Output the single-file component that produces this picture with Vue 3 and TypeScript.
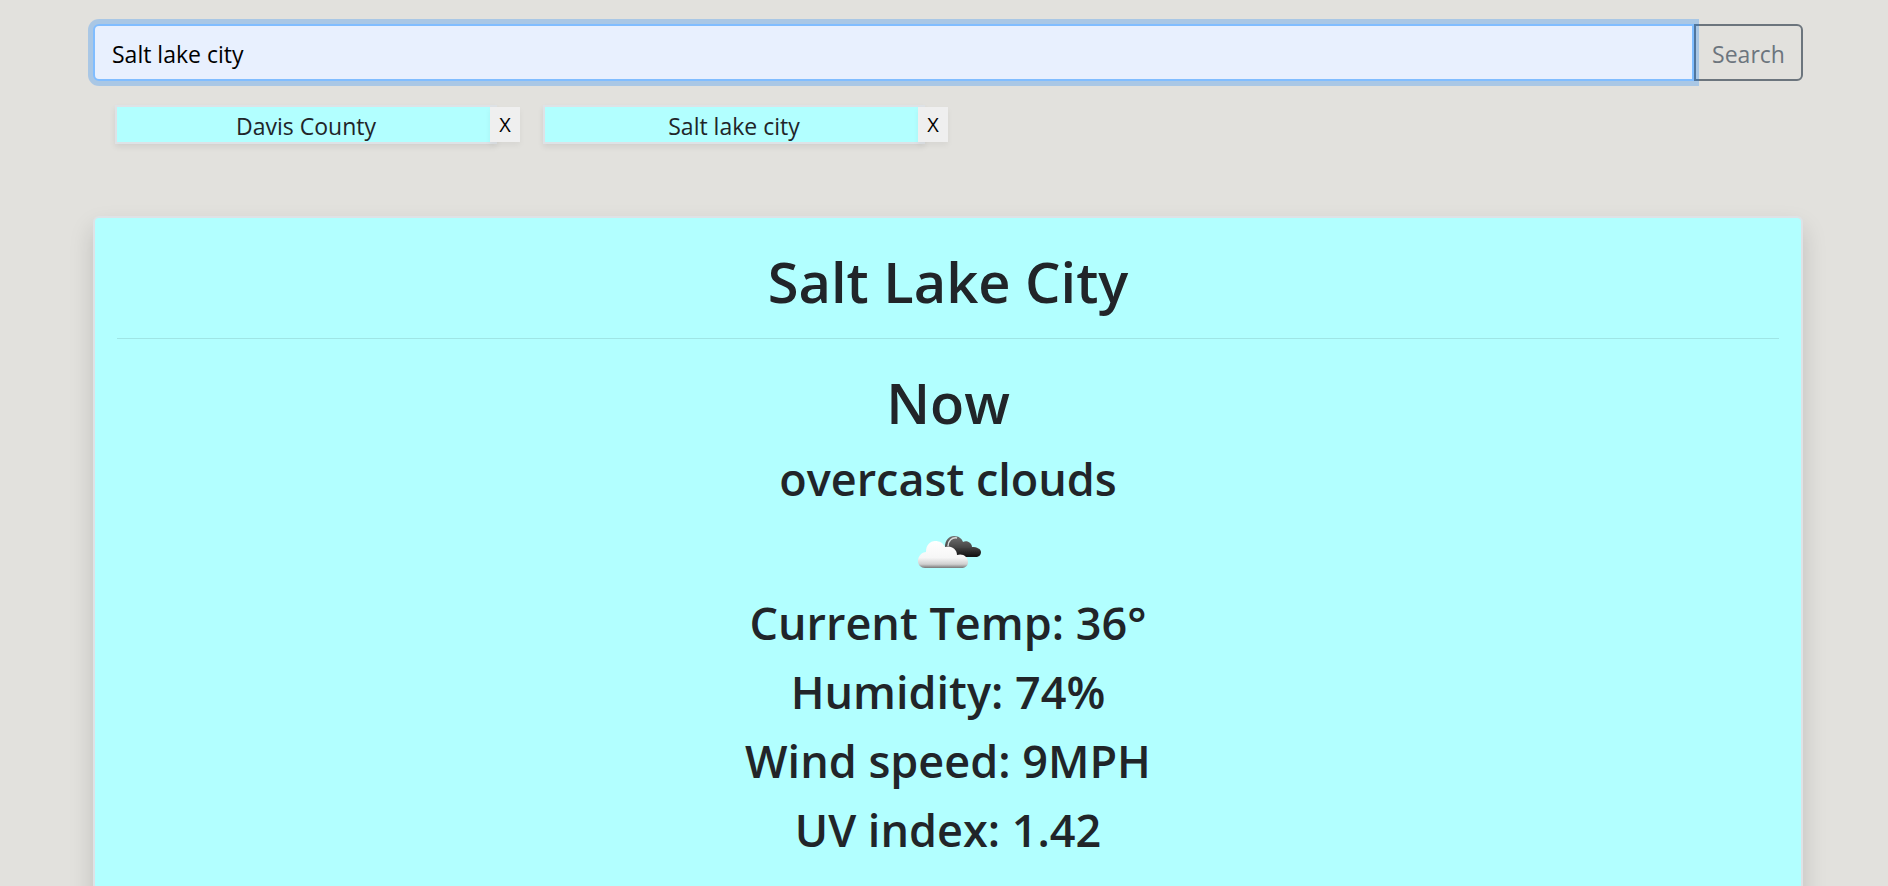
<script setup lang="ts">
import { computed, ref } from 'vue'

interface Weather {
  city: string
  description: string
  temp: number
  humidity: number
  wind: number
  uv: number
}

const query = ref<string>('Salt lake city')
const history = ref<string[]>(['Davis County', 'Salt lake city'])

const weather = ref<Weather>({
  city: 'Salt Lake City',
  description: 'overcast clouds',
  temp: 36,
  humidity: 74,
  wind: 9,
  uv: 1.42,
})

const readings = computed<string[]>(() => [
  `Current Temp: ${weather.value.temp}°`,
  `Humidity: ${weather.value.humidity}%`,
  `Wind speed: ${weather.value.wind}MPH`,
  `UV index: ${weather.value.uv}`,
])

function search(): void {
  const name = query.value.trim()
  if (name && !history.value.includes(name)) history.value.push(name)
}

function remove(index: number): void {
  history.value.splice(index, 1)
}
</script>

<template>
  <main class="page">
    <form class="search" @submit.prevent="search">
      <input v-model="query" class="search-input" type="text" aria-label="City" />
      <button class="search-button" type="submit">Search</button>
    </form>

    <ul class="history">
      <li v-for="(name, index) in history" :key="name" class="history-item">
        <button class="city" type="button" @click="query = name">{{ name }}</button>
        <button class="remove" type="button" :aria-label="`X, remove ${name}`" @click="remove(index)">X</button>
      </li>
    </ul>

    <section class="card">
      <h1>{{ weather.city }}</h1>
      <hr />
      <h1>Now</h1>
      <h2>{{ weather.description }}</h2>
      <svg class="icon" viewBox="0 0 75 75" role="img" aria-label="Overcast clouds">
        <defs>
          <linearGradient id="light" x1="0" y1="0" x2="0" y2="1">
            <stop offset="0" stop-color="#ffffff" />
            <stop offset="0.62" stop-color="#f6f6f6" />
            <stop offset="0.86" stop-color="#cfcfcf" />
            <stop offset="1" stop-color="#777777" />
          </linearGradient>
          <linearGradient id="dark" x1="0" y1="0" x2="0" y2="1">
            <stop offset="0" stop-color="#707070" />
            <stop offset="0.5" stop-color="#4a4a4a" />
            <stop offset="0.75" stop-color="#2b2b2b" />
            <stop offset="1" stop-color="#111111" />
          </linearGradient>
          <filter id="soft" x="-10%" y="-10%" width="120%" height="120%">
            <feGaussianBlur stdDeviation="0.6" />
          </filter>
        </defs>
        <g filter="url(#soft)">
          <path
            fill="url(#dark)"
            d="M34 28 C34 21 38 17 43 17 C48 17 51 20 52 23 C56 21 61 24 61 28 C66 28 70 30 70 33 C70 36 68 38 64 38 H46 C38 38 34 34 34 28 Z"
          />
          <path fill="none" stroke="#d8dcdc" stroke-width="1.5" d="M37 27 C37 22 41 18 46 19" />
          <path
            fill="url(#light)"
            d="M14 49 C10 49 7 46 7 42 C7 37 11 33 15 33 C15 26 19 22 24 22 C29 22 32 24 34 28 C40 26 46 30 46 36 C52 34 57 38 57 43 C57 47 54 49 50 49 Z"
          />
        </g>
      </svg>
      <h2 v-for="line in readings" :key="line">{{ line }}</h2>
    </section>
  </main>
</template>

<style>
body {
  margin: 0;
  background: #e2e1dd;
}
</style>

<style scoped>
.page {
  box-sizing: border-box;
  padding: 24px 85px 0 93px;
  color: #212529;
  font-family: "Segoe UI", "Open Sans", "Noto Sans", sans-serif;
  font-size: 23px;
}

button,
input {
  box-sizing: border-box;
  margin: 0;
  font-family: inherit;
}

.search {
  display: flex;
  height: 57px;
}

.search-input {
  position: relative;
  z-index: 1;
  flex: 1;
  min-width: 0;
  padding: 2px 17px 0;
  border: 2px solid #80bdff;
  border-radius: 6px 0 0 6px;
  outline: 0;
  background: #e8f0fe;
  box-shadow: 0 0 0 5px rgba(0, 123, 255, 0.25);
  color: #000;
  font-size: 23px;
}

.search-button {
  width: 109px;
  padding: 2px 0 0;
  border: 2px solid #6c757d;
  border-radius: 0 6px 6px 0;
  background: transparent;
  color: #6c757d;
  font-size: 23px;
}

.history {
  display: flex;
  gap: 23px;
  margin: 24px 0 72px;
  padding: 0 22px;
  list-style: none;
}

.history-item {
  display: flex;
  width: 405px;
  height: 39px;
}

.city {
  flex: 1;
  padding: 4px 0 0;
  border: 2px solid #dee2e6;
  background: #b2ffff;
  box-shadow: 0 3px 6px rgba(0, 0, 0, 0.075);
  color: #212529;
  font-size: 23px;
  line-height: 31px;
}

.remove {
  z-index: 1;
  width: 30px;
  height: 35px;
  margin: 2px 0 0 -7px;
  padding: 0;
  border: 0;
  background: #efefef;
  box-shadow: 0 3px 6px rgba(0, 0, 0, 0.05);
  color: #000;
  font-size: 20px;
  line-height: 35px;
}

.card {
  padding: 27px 22px 48px;
  border: 2px solid #dee2e6;
  border-radius: 6px;
  background: #b2ffff;
  box-shadow: 0 12px 24px rgba(0, 0, 0, 0.15);
  text-align: center;
}

h1,
h2 {
  margin: 0 0 12px;
  font-weight: 600;
}

h1 {
  font-size: 56px;
  line-height: 72px;
}

h2 {
  font-size: 45px;
  line-height: 57px;
}

hr {
  margin: 21px 0 27px;
  border: 0;
  border-top: 1px solid rgba(0, 0, 0, 0.1);
}

.icon {
  display: block;
  width: 75px;
  height: 75px;
  margin: 0 auto;
}
</style>
